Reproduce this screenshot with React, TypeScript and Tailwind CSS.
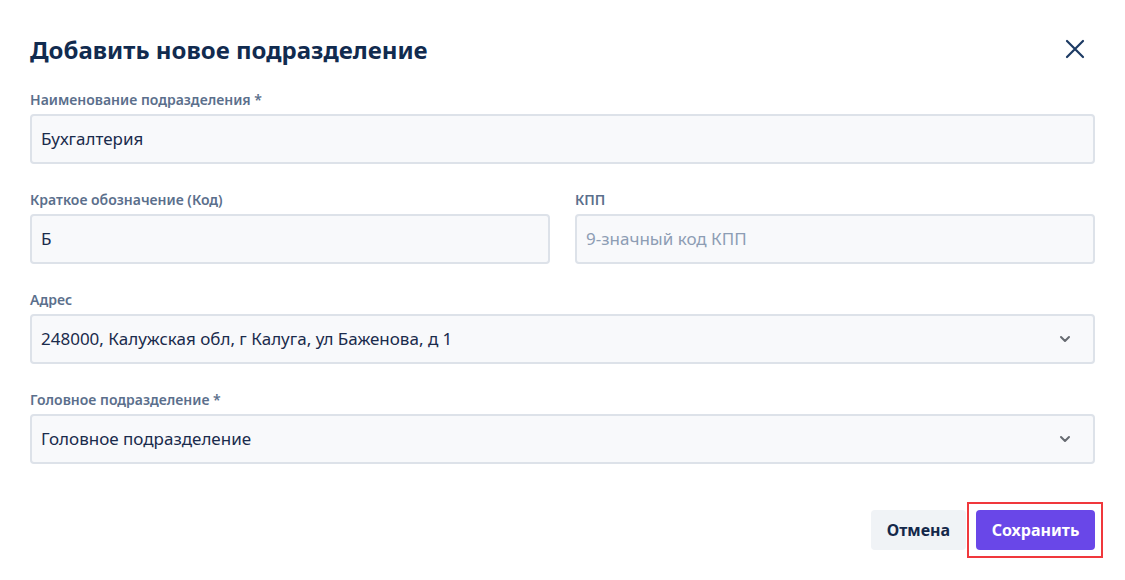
import React from "react";

const font = { fontFamily: '"Noto Sans", "Open Sans", sans-serif' };

function Label({ children }: { children: React.ReactNode }) {
  return (
    <div className="text-[14px] font-semibold leading-[20px] text-[#5b6f8c] mb-[4px]">{children}</div>
  );
}

function Field({ value, placeholder, select }: { value?: string; placeholder?: string; select?: boolean }) {
  return (
    <div className="h-[50px] rounded-[4px] border-2 border-[#dde2e9] bg-[#f8f9fb] flex items-center pl-[9px] pr-[20px]">
      <span className={"flex-1 text-[17px] " + (value ? "text-[#1a2b4c]" : "text-[#8d9db4]")}>
        {value || placeholder}
      </span>
      {select && (
        <svg width="12" height="8" viewBox="0 0 12 8" className="mr-[2px]">
          <path d="M2 2 L6 6 L10 2" stroke="#666a70" strokeWidth="2" fill="none" strokeLinecap="round" strokeLinejoin="round" />
        </svg>
      )}
    </div>
  );
}

export default function App() {
  return (
    <div style={font} className="w-[1125px] h-[580px] bg-white px-[30px] relative overflow-hidden">
      <div className="flex items-center justify-between pt-[33px] h-[90px] pb-[24px]">
        <h1 className="text-[24px] font-bold text-[#112b4f] leading-[33px]">Добавить новое подразделение</h1>
        <svg width="20" height="20" viewBox="0 0 20 20" className="mr-[10px] -mt-[2px]">
          <path d="M2 2 L18 18 M18 2 L2 18" stroke="#1c3a63" strokeWidth="2.2" strokeLinecap="round" />
        </svg>
      </div>
      <div className="flex flex-col gap-[26px]">
        <div>
          <Label>Наименование подразделения *</Label>
          <Field value="Бухгалтерия" />
        </div>
        <div className="grid grid-cols-2 gap-[25px]">
          <div>
            <Label>Краткое обозначение (Код)</Label>
            <Field value="Б" />
          </div>
          <div>
            <Label>КПП</Label>
            <Field placeholder="9-значный код КПП" />
          </div>
        </div>
        <div>
          <Label>Адрес</Label>
          <Field value="248000, Калужская обл, г Калуга, ул Баженова, д 1" select />
        </div>
        <div>
          <Label>Головное подразделение *</Label>
          <Field value="Головное подразделение" select />
        </div>
      </div>
      <div className="flex justify-end gap-[10px] mt-[46px]">
        <button className="h-[40px] w-[95px] rounded-[4px] bg-[#f0f3f6] text-[16px] font-bold text-[#14284a]">Отмена</button>
        <div className="relative">
          <button className="h-[40px] w-[119px] rounded-[4px] bg-[#6947e8] text-[16px] font-bold text-white">Сохранить</button>
          <div className="absolute -left-[9px] -top-[8px] -right-[8px] -bottom-[8px] border-2 border-[#f0383c] pointer-events-none" />
        </div>
      </div>
    </div>
  );
}
